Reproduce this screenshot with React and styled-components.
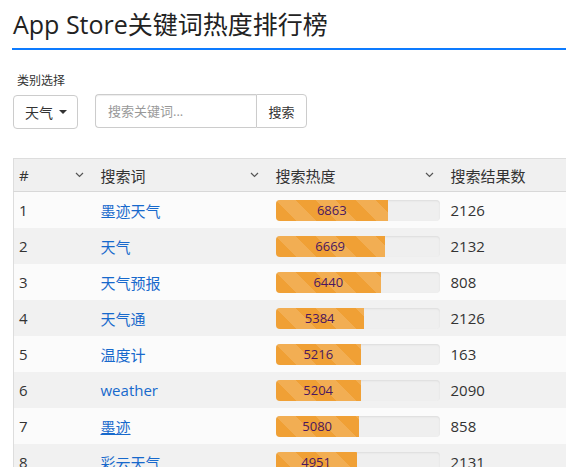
import React from 'react';
import styled, { createGlobalStyle } from 'styled-components';

const GlobalStyle = createGlobalStyle`
  html, body {
    margin: 0;
    padding: 0;
    background: #fff;
    overflow: hidden;
  }
  body {
    font-family: "Open Sans", "Noto Sans CJK SC", sans-serif;
    color: #333;
  }
`;

const Page = styled.div`
  padding: 0 0 0 12px;
  width: 640px;
`;

const Title = styled.h1`
  margin: 0;
  padding: 7px 0 7px 1px;
  font-size: 25px;
  font-weight: 400;
  line-height: 34px;
  color: #222;
  border-bottom: 2px solid #0d7bff;
  width: 554px;
`;

const Filters = styled.div`
  display: flex;
  align-items: flex-end;
  gap: 17px;
  padding: 23px 0 0 1px;
`;

const Field = styled.div`
  display: flex;
  flex-direction: column;
  gap: 6px;
`;

const Label = styled.label`
  font-size: 12px;
  line-height: 16px;
  color: #333;
  padding-left: 4px;
`;

const SelectButton = styled.button`
  display: flex;
  align-items: center;
  gap: 6px;
  height: 34px;
  padding: 0 10px 0 11px;
  border: 1px solid #ccc;
  border-radius: 4px;
  background: #fff;
  font-family: inherit;
  font-size: 14px;
  color: #333;
`;

const Caret = styled.span`
  width: 0;
  height: 0;
  border-left: 4px solid transparent;
  border-right: 4px solid transparent;
  border-top: 4px solid #333;
`;

const SearchGroup = styled.div`
  display: flex;
  height: 34px;
  margin-bottom: 1px;
`;

const SearchInput = styled.input`
  width: 161px;
  box-sizing: border-box;
  height: 34px;
  padding: 0 12px;
  border: 1px solid #ccc;
  border-right: none;
  border-radius: 4px 0 0 4px;
  font-family: inherit;
  font-size: 13px;
  color: #555;
  box-shadow: inset 0 1px 1px rgba(0, 0, 0, 0.075);
  &::placeholder {
    color: #999;
  }
`;

const SearchButton = styled.button`
  width: 51px;
  height: 34px;
  border: 1px solid #ccc;
  border-radius: 0 4px 4px 0;
  background: #fff;
  font-family: inherit;
  font-size: 13px;
  color: #333;
`;

const Table = styled.table`
  margin-top: 29px;
  margin-left: 1px;
  border-collapse: collapse;
  border-left: 1px solid #ddd;
  border-top: 1px solid #ddd;
  table-layout: fixed;
  width: 610px;
`;

const Head = styled.th`
  width: ${p => p.$w}px;
  height: 33px;
  padding: 0 5px;
  box-sizing: border-box;
  background: #f0f0f0;
  border-bottom: 1px solid #d8d8d8;
  text-align: left;
  font-size: 15px;
  font-weight: 400;
  color: #333;
`;

const HeadInner = styled.div`
  display: flex;
  align-items: center;
  justify-content: space-between;
  padding-right: 7px;
`;

const Row = styled.tr`
  background: ${p => (p.$odd ? '#fbfbfb' : '#f1f1f1')};
`;

const Cell = styled.td`
  height: 36px;
  padding: 0 5px;
  font-size: 15px;
  color: #333;
  vertical-align: middle;
`;

const KeywordLink = styled.a`
  color: #1769cc;
  text-decoration: ${p => (p.$hover ? 'underline' : 'none')};
`;

const Track = styled.div`
  width: 164px;
  height: 21px;
  border-radius: 4px;
  background: #efefef;
  box-shadow: inset 0 1px 2px rgba(0, 0, 0, 0.08);
  overflow: hidden;
`;

const Fill = styled.div`
  height: 100%;
  background-color: #f0a035;
  background-image: linear-gradient(
    45deg,
    rgba(255, 255, 255, 0.15) 25%,
    transparent 25%,
    transparent 50%,
    rgba(255, 255, 255, 0.15) 50%,
    rgba(255, 255, 255, 0.15) 75%,
    transparent 75%,
    transparent
  );
  background-size: 40px 40px;
  display: flex;
  align-items: center;
  justify-content: center;
  font-size: 13px;
  color: #4a1760;
`;

const Chevron = () => (
  <svg width="9" height="6" viewBox="0 0 9 6">
    <path d="M1 1l3.5 3.5L8 1" fill="none" stroke="#555" strokeWidth="1.2" />
  </svg>
);

const rows = [
  [1, '墨迹天气', 6863, 2126],
  [2, '天气', 6669, 2132],
  [3, '天气预报', 6440, 808],
  [4, '天气通', 5384, 2126],
  [5, '温度计', 5216, 163],
  [6, 'weather', 5204, 2090],
  [7, '墨迹', 5080, 858],
  [8, '彩云天气', 4951, 2131],
];

const columns = [
  { title: '#', w: 82, sort: true },
  { title: '搜索词', w: 175, sort: true },
  { title: '搜索热度', w: 175, sort: true },
  { title: '搜索结果数', w: 178, sort: false },
];

export default function App() {
  return (
    <Page>
      <GlobalStyle />
      <Title>App Store关键词热度排行榜</Title>
      <Filters>
        <Field>
          <Label>类别选择</Label>
          <SelectButton>
            天气 <Caret />
          </SelectButton>
        </Field>
        <SearchGroup>
          <SearchInput placeholder="搜索关键词..." />
          <SearchButton>搜索</SearchButton>
        </SearchGroup>
      </Filters>
      <Table>
        <thead>
          <tr>
            {columns.map(c => (
              <Head key={c.title} $w={c.w}>
                <HeadInner>
                  <span>{c.title}</span>
                  {c.sort && <Chevron />}
                </HeadInner>
              </Head>
            ))}
          </tr>
        </thead>
        <tbody>
          {rows.map(([rank, word, heat, count]) => (
            <Row key={rank} $odd={rank % 2 === 1}>
              <Cell>{rank}</Cell>
              <Cell>
                <KeywordLink href="#" $hover={rank === 7}>{word}</KeywordLink>
              </Cell>
              <Cell>
                <Track>
                  <Fill style={{ width: `${(heat / 10000) * 100}%` }}>{heat}</Fill>
                </Track>
              </Cell>
              <Cell>{count}</Cell>
            </Row>
          ))}
        </tbody>
      </Table>
    </Page>
  );
}
